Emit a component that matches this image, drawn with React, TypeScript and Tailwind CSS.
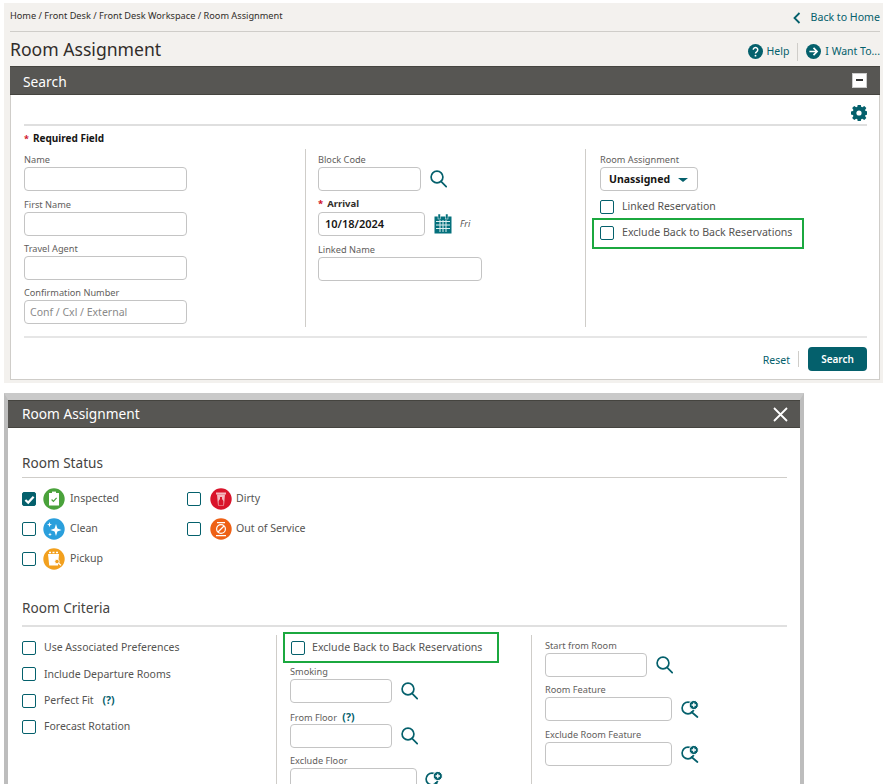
import { ReactNode } from "react";

type IconProps = {
  className?: string;
};

function SearchIcon({ className = "w-[17px] h-[18px]" }: IconProps) {
  return (
    <svg viewBox="0 0 17 18" className={`${className} shrink-0`} fill="none" stroke="#04606c" strokeWidth="1.7">
      <circle cx="7" cy="7" r="5.9" />
      <path d="M11 11.4 16.2 16.6" strokeLinecap="round" />
    </svg>
  );
}

function SearchPlusIcon() {
  return (
    <svg viewBox="0 0 18 18" className="w-[18px] h-[18px] shrink-0" fill="none" stroke="#04606c" strokeWidth="1.7">
      <circle cx="7" cy="8" r="5.9" />
      <path d="M10.5 12 16.4 17" strokeLinecap="round" />
      <circle cx="12.8" cy="5" r="4.6" fill="#04606c" stroke="#fff" strokeWidth="1" />
      <path d="M12.8 2.8v4.4M10.6 5h4.4" stroke="#fff" strokeWidth="1.3" />
    </svg>
  );
}

function CalendarIcon() {
  return (
    <svg viewBox="0 0 18 20" className="w-[18px] h-[20px] shrink-0">
      <rect x="0.5" y="2.5" width="17" height="17" fill="#04707c" />
      <rect x="4" y="0" width="2.4" height="5" fill="#04707c" stroke="#fff" strokeWidth="0.5" />
      <rect x="11.6" y="0" width="2.4" height="5" fill="#04707c" stroke="#fff" strokeWidth="0.5" />
      <path d="M2 7.5h14M2 11h14M2 14.5h14M6 6v12M9 6v12M12 6v12" stroke="#dff0f0" strokeWidth="1" />
    </svg>
  );
}

function GearIcon() {
  return (
    <svg viewBox="0 0 16 16" className="w-[16px] h-[16px]">
      <path
        d="M6.5 0h3l.4 2.2 1.2.5L13 1.4l2.1 2.1-1.3 1.9.5 1.2 2.2.4v3l-2.2.4-.5 1.2 1.3 1.9-2.1 2.1-1.9-1.3-1.2.5-.4 2.2h-3l-.4-2.2-1.2-.5L3 15.6.9 13.5l1.3-1.9-.5-1.2L-.5 10V7l2.2-.4.5-1.2L.9 3.5 3 1.4l1.9 1.3 1.2-.5z"
        fill="#04606c"
        transform="translate(.25 -.5)"
      />
      <circle cx="8" cy="8" r="2.6" fill="#fff" />
    </svg>
  );
}

function CheckBox({ checked = false }: { checked?: boolean }) {
  return (
    <span
      className={`flex w-[14px] h-[14px] shrink-0 items-center justify-center rounded-[2px] border-[1.5px] border-[#04606c] ${
        checked ? "bg-[#04606c]" : "bg-white"
      }`}
    >
      {checked && (
        <svg viewBox="0 0 12 12" className="w-[11px] h-[11px]" fill="none" stroke="#fff" strokeWidth="2.4">
          <path d="M1.5 6.5 4.6 9.4 10.5 3" />
        </svg>
      )}
    </span>
  );
}

function Input({ className, placeholder, value }: { className: string; placeholder?: string; value?: string }) {
  return (
    <div className={`h-[24px] rounded-[4px] border border-[#c4c4c4] bg-white flex items-center shrink-0 ${className}`}>
      {placeholder && <span className="pl-[5px] pt-[2px] text-[10.5px] text-[#8a8a8a]">{placeholder}</span>}
      {value && <span className="pl-[6px] text-[11px] font-semibold text-[#161513]">{value}</span>}
    </div>
  );
}

function Label({ children }: { children: ReactNode }) {
  return <div className="h-[20px] pt-[6px] text-[9.2px] leading-[14px] text-[#5f5e5c] whitespace-nowrap">{children}</div>;
}

function Hint() {
  return <span className="text-[10.5px] font-bold text-[#04606c]">(?)</span>;
}

function StatusIcon({ kind }: { kind: string }) {
  const colors: Record<string, string> = {
    inspected: "#4aa23b",
    clean: "#2a9fdc",
    pickup: "#f2a01e",
    dirty: "#d9142b",
    out: "#ee6116",
  };
  return (
    <svg viewBox="0 0 22 22" className="w-[22px] h-[22px] shrink-0">
      <circle cx="11" cy="11" r="10.7" fill={colors[kind]} />
      {kind === "inspected" && (
        <>
          <rect x="6" y="5" width="10" height="12.5" fill="#fff" />
          <rect x="9" y="3.6" width="4" height="2.4" fill="#fff" />
          <path d="M8.6 11.5 10.4 13.3 13.6 9.8" fill="none" stroke="#4aa23b" strokeWidth="1.2" />
        </>
      )}
      {kind === "clean" && (
        <>
          <path d="M13 6 14.4 10.6 18.6 12 14.4 13.4 13 18 11.6 13.4 7.4 12 11.6 10.6z" fill="#fff" />
          <path d="M6.5 4 7.2 6 9 6.6 7.2 7.3 6.5 9.2 5.8 7.3 4 6.6 5.8 6z" fill="#fff" />
          <path d="M7 14.5 7.5 15.9 8.9 16.4 7.5 16.9 7 18.2 6.5 16.9 5.1 16.4 6.5 15.9z" fill="#fff" />
        </>
      )}
      {kind === "pickup" && (
        <>
          <path d="M5 6h11l-1 11.5H6.2z" fill="#fff" />
          <path d="M6 4.5h2M9.5 4.5h2M13 4.5h2" stroke="#fff" strokeWidth="1.4" />
          <circle cx="14" cy="13.5" r="2.2" fill="#f2a01e" stroke="#fff" strokeWidth="0.8" />
          <path d="M15.5 15 18 17.4" stroke="#fff" strokeWidth="1.3" />
        </>
      )}
      {kind === "dirty" && (
        <>
          <path d="M6 4.5h10v2H6z" fill="#f4b7be" />
          <path d="M7 6.5h8l-1 11H8z" fill="#f4b7be" />
          <path d="M10 9h2v2l1.4 2v4H8.6v-4L10 11z" fill="#d9142b" />
        </>
      )}
      {kind === "out" && (
        <>
          <path d="M7 4.6h8M6 17.6h10" stroke="#fff" strokeWidth="1.2" />
          <circle cx="11" cy="11" r="4.4" fill="none" stroke="#fff" strokeWidth="1.2" />
          <path d="M8 14 14 8" stroke="#fff" strokeWidth="1.2" />
        </>
      )}
    </svg>
  );
}

function StatusRow({ kind, label, checked, wide }: { kind: string; label: string; checked?: boolean; wide?: boolean }) {
  return (
    <div className="flex h-[30px] items-center">
      <CheckBox checked={checked} />
      <span className={wide ? "ml-[9px]" : "ml-[7px]"}>
        <StatusIcon kind={kind} />
      </span>
      <span className={`text-[10.6px] text-[#555452] ${wide ? "ml-[4px]" : "ml-[5px]"}`}>{label}</span>
    </div>
  );
}

function CriteriaRow({ children }: { children: ReactNode }) {
  return (
    <div className="flex h-[26.3px] items-center gap-[8px] text-[10.5px] text-[#555452]">
      <CheckBox />
      <span>{children}</span>
    </div>
  );
}

export default function App() {
  return (
    <div className="relative w-[884px] h-[784px] overflow-hidden bg-white pt-[3px] font-['Noto_Sans','Open_Sans',sans-serif]">
      {/* search page */}
      <div className="ml-[4px] h-[380px] w-[879px] bg-[#f3f1ee] pl-[6px] pr-[3px]">
        <div className="flex h-[29px] items-center justify-between border-b border-[#cfcdc9]">
          <span className="text-[9.2px] text-[#312d2a] pb-[2px]">Home / Front Desk / Front Desk Workspace / Room Assignment</span>
          <span className="flex items-center gap-[10px] pt-[2px] text-[10.6px] text-[#04606c]">
            <svg viewBox="0 0 8 12" className="w-[8px] h-[12px]" fill="none" stroke="#04606c" strokeWidth="1.8">
              <path d="M6.5 1 1.5 6l5 5" />
            </svg>
            Back to Home
          </span>
        </div>
        <div className="flex h-[34px] items-center justify-between">
          <h1 className="text-[17.6px] text-[#312d2a]">Room Assignment</h1>
          <div className="mt-[5px] flex items-center text-[10.5px] text-[#04606c]">
            <svg viewBox="0 0 16 16" className="w-[15px] h-[15px] mr-[3px] -ml-[1px]">
              <circle cx="8" cy="8" r="8" fill="#04606c" />
              <path d="M5.6 6.2a2.4 2.4 0 1 1 3.6 2.1c-.8.5-1.2.9-1.2 1.7" fill="none" stroke="#fff" strokeWidth="1.6" />
              <circle cx="8" cy="12.4" r="1" fill="#fff" />
            </svg>
            <span>Help</span>
            <span className="mx-[8px] h-[18px] w-px bg-[#cfcdc9]" />
            <svg viewBox="0 0 16 16" className="w-[15px] h-[15px] mr-[4px]">
              <circle cx="8" cy="8" r="8" fill="#04606c" />
              <path d="M3.6 8h8M8 4.2 11.8 8 8 11.8" fill="none" stroke="#fff" strokeWidth="1.8" />
            </svg>
            <span>I Want To...</span>
          </div>
        </div>
        <div className="w-[870px] h-[314px] border-x border-b border-[#cfcdc9] bg-white">
          <div className="flex h-[29px] -mx-px items-center justify-between border-y border-[#45443f] bg-[#575653] pl-[13px] pr-[13px]">
            <span className="pt-[3px] text-[13.8px] text-white">Search</span>
            <span className="flex h-[15px] w-[15px] items-center justify-center border border-[#ccc] bg-white mb-[1px]">
              <span className="h-[1.5px] w-[7px] bg-[#333]" />
            </span>
          </div>
          <div className="pl-[13px] pr-[12px]">
            <div className="flex h-[31px] items-end justify-end border-b-2 border-[#dfdfdf] pb-[3px]">
              <GearIcon />
            </div>
            <div className="flex h-[23px] items-center gap-[4px] pt-[2px] text-[10px] font-bold text-[#161513]">
              <span className="text-[#d0122b] text-[9px]">*</span> Required Field
            </div>
            <div className="flex h-[178px]">
              <div className="w-[282px] border-r border-[#cfcdc9]">
                <div className="-mt-[2px]">
                  <Label>Name</Label>
                  <Input className="w-[163px]" />
                  <div className="mt-[0.5px]"><Label>First Name</Label></div>
                  <Input className="w-[163px]" />
                  <div className="mt-[0.5px]"><Label>Travel Agent</Label></div>
                  <Input className="w-[163px]" />
                  <Label>Confirmation Number</Label>
                  <Input className="w-[163px]" placeholder="Conf / Cxl / External" />
                </div>
              </div>
              <div className="w-[280px] border-r border-[#cfcdc9] pl-[12px]">
                <div className="-mt-[2px]">
                  <Label>Block Code</Label>
                  <div className="flex items-center gap-[9px]">
                    <Input className="w-[103px]" />
                    <SearchIcon />
                  </div>
                  <div className="h-[21px] pt-[6px] text-[9.5px] font-bold leading-[14px] text-[#312d2a]">
                    <span className="text-[#d0122b] mr-[4px]">*</span>Arrival
                  </div>
                  <div className="flex items-center">
                    <Input className="w-[107px]" value="10/18/2024" />
                    <span className="ml-[9px]"><CalendarIcon /></span>
                    <span className="ml-[8px] text-[9px] italic text-[#555452]">Fri</span>
                  </div>
                  <div className="mt-[1px]"><Label>Linked Name</Label></div>
                  <Input className="w-[164px]" />
                </div>
              </div>
              <div className="pl-[14px]">
                <div className="-mt-[2px]">
                  <Label>Room Assignment</Label>
                  <div className="flex h-[24px] w-[98px] items-center justify-between rounded-[4px] border border-[#c4c4c4] pl-[8px] pr-[9px] pt-[1px] text-[10.5px] font-bold text-[#161513]">
                    Unassigned
                    <span className="h-0 w-0 border-x-[5px] border-t-[4px] border-x-transparent border-t-[#04606c]" />
                  </div>
                  <div className="mt-[8px] flex items-center gap-[8px] text-[10.5px] text-[#555452]">
                    <CheckBox />
                    Linked Reservation
                  </div>
                  <div className="-ml-[8px] mt-[3px] flex h-[31px] w-[212px] items-center gap-[8px] border-2 border-[#1ba83f] pl-[6px] text-[10.6px] text-[#555452]">
                    <CheckBox />
                    Exclude Back to Back Reservations
                  </div>
                </div>
              </div>
            </div>
            <div className="mt-[9px] flex h-[35px] items-center justify-end border-t-2 border-[#e6e6e6] pt-[9px]">
              <span className="pt-[3px] text-[10.5px] text-[#04606c]">Reset</span>
              <span className="ml-[8px] mr-[9px] h-[16px] w-px bg-[#cfcdc9]" />
              <span className="flex h-[24px] w-[59px] items-center justify-center rounded-[4px] bg-[#04606c] text-[10px] font-semibold text-white">
                Search
              </span>
            </div>
          </div>
        </div>
      </div>

      {/* room assignment dialog */}
      <div className="ml-[4px] mt-[10px] h-[400px] w-[800px] border-x-4 border-t-[7px] border-x-[#bdbdbd] border-t-[#c9c9c9] bg-white">
        <div className="flex h-[28px] items-center justify-between border-y border-[#45443f] bg-[#575653] pl-[14px] pr-[12px]">
          <span className="pt-[1px] text-[13.7px] text-white">Room Assignment</span>
          <svg viewBox="0 0 15 15" className="w-[15px] h-[15px]" fill="none" stroke="#fff" strokeWidth="1.8">
            <path d="M1 1 14 14M14 1 1 14" />
          </svg>
        </div>
        <div className="px-[14px]">
          <div className="flex h-[50px] w-[765px] items-end border-b border-[#cfcdc9] pb-[4px] text-[13.6px] text-[#45443f]">
            Room Status
          </div>
          <div className="mt-[6px] flex h-[90px]">
            <div className="w-[165px]">
              <StatusRow kind="inspected" label="Inspected" checked />
              <StatusRow kind="clean" label="Clean" />
              <StatusRow kind="pickup" label="Pickup" />
            </div>
            <div>
              <StatusRow kind="dirty" label="Dirty" wide />
              <StatusRow kind="out" label="Out of Service" wide />
            </div>
          </div>
          <div className="flex h-[53px] w-[765px] items-end border-b-2 border-[#e0e0e0] pb-[7px] text-[13.6px] text-[#45443f]">
            Room Criteria
          </div>
          <div className="mt-[8px] flex">
            <div className="w-[255px] h-[200px] border-r border-[#cfcdc9]">
              <CriteriaRow>Use Associated Preferences</CriteriaRow>
              <CriteriaRow>Include Departure Rooms</CriteriaRow>
              <CriteriaRow>
                Perfect Fit <span className="ml-[6px]"><Hint /></span>
              </CriteriaRow>
              <CriteriaRow>Forecast Rotation</CriteriaRow>
            </div>
            <div className="w-[255px] h-[200px] border-r border-[#cfcdc9] pl-[13px]">
              <div className="-ml-[7px] -mt-[3px] flex h-[31px] w-[216px] items-center gap-[7px] border-2 border-[#1ba83f] pl-[6px] text-[10.6px] text-[#555452]">
                <CheckBox />
                Exclude Back to Back Reservations
              </div>
              <div className="-mt-[4px]"><Label>Smoking</Label></div>
              <div className="flex items-center gap-[9px]">
                <Input className="w-[102px]" />
                <SearchIcon />
              </div>
              <div className="mt-[1px]">
                <Label>
                  From Floor <span className="ml-[3px]"><Hint /></span>
                </Label>
              </div>
              <div className="flex items-center gap-[9px]">
                <Input className="w-[102px]" />
                <SearchIcon />
              </div>
              <Label>Exclude Floor</Label>
              <div className="flex items-center gap-[8px]">
                <Input className="w-[127px]" />
                <SearchPlusIcon />
              </div>
            </div>
            <div className="pl-[13px] -mt-[2px]">
              <Label>Start from Room</Label>
              <div className="flex items-center gap-[9px]">
                <Input className="w-[102px]" />
                <SearchIcon />
              </div>
              <Label>Room Feature</Label>
              <div className="flex items-center gap-[9px]">
                <Input className="w-[127px]" />
                <SearchPlusIcon />
              </div>
              <div className="mt-[1px]"><Label>Exclude Room Feature</Label></div>
              <div className="flex items-center gap-[9px]">
                <Input className="w-[127px]" />
                <SearchPlusIcon />
              </div>
            </div>
          </div>
        </div>
      </div>
    </div>
  );
}
